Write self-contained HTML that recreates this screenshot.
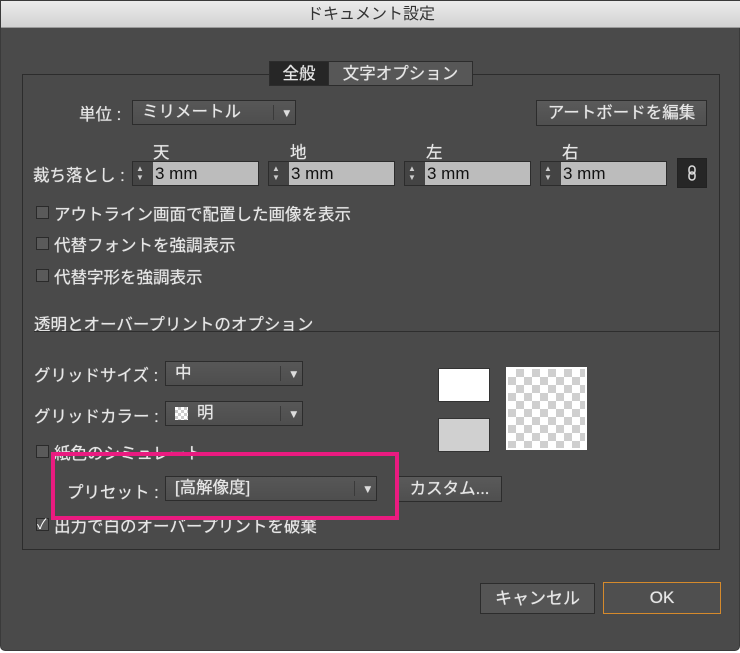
<!DOCTYPE html>
<html><head><meta charset="utf-8"><style>
*{box-sizing:border-box;margin:0;padding:0}
body{width:740px;height:653px;background:#fff;position:relative;overflow:hidden;font-family:"Liberation Sans","Noto Sans CJK JP",sans-serif;color:#e6e6e6;font-size:16.5px}
.dlg{position:absolute;left:0;top:0;width:740px;height:651px;background:#4a4a4a;border-radius:0 0 5px 5px;border:1px solid #3a3a3a}
.a{position:absolute;white-space:nowrap}
.title{left:0;top:0;width:740px;height:27px;background:linear-gradient(#ececec,#d2d2d2);border-bottom:1px solid #9a9a9a;color:#333;text-align:center;font-size:16px;line-height:27px}
.box{left:21px;top:73px;width:698px;height:476px;border:1px solid #2c2c2c}
.tab{top:60px;height:25px;line-height:24px;text-align:center;font-size:16.5px;border:1px solid #2c2c2c;text-shadow:0 0 .6px #fff}
.dd{height:25px;border:1px solid #2c2c2c;background:linear-gradient(#575757,#4e4e4e);line-height:23px;padding-left:9px;font-size:16.5px;text-shadow:0 0 .6px #fff}
.dd:after{content:"▾";position:absolute;right:5px;top:0;font-size:13px;color:#ddd}
.dd:before{content:"";position:absolute;right:21px;top:4px;height:15px;border-left:1px solid #3a3a3a}
.btn{height:26px;border:1px solid #2c2c2c;background:linear-gradient(#5a5a5a,#4f4f4f);text-align:center;line-height:24px;font-size:16.5px;text-shadow:0 0 .6px #fff}
.num{height:25px;border:1px solid #2c2c2c;background:#444}
.num .f{position:absolute;left:20px;top:0;right:0;bottom:0;background:#bcbcbc;color:#111;font-size:17px;line-height:23px;padding-left:2px}
.num .s{position:absolute;left:3px;top:2px;font-size:8px;line-height:9px;color:#ccc}
.cb{width:13px;height:13px;border:1px solid #2a2a2a;background:#5a5a5a}
.lbl{font-size:16.5px;text-shadow:0 0 .6px #fff}
</style></head><body>
<div class="dlg">
<div class="a title">ドキュメント設定</div>
<div class="a box"></div>
<div class="a tab" style="left:268px;width:60px;background:#262626">全般</div>
<div class="a tab" style="left:327px;width:145px;background:#575757">文字オプション</div>

<div class="a lbl" style="left:78px;top:100px">単位 :</div>
<div class="a dd" style="left:131px;top:99px;width:164px">ミリメートル</div>
<div class="a btn" style="left:535px;top:99px;width:171px">アートボードを編集</div>

<div class="a lbl" style="left:152px;top:138px">天</div>
<div class="a lbl" style="left:289px;top:138px">地</div>
<div class="a lbl" style="left:425px;top:138px">左</div>
<div class="a lbl" style="left:561px;top:138px">右</div>
<div class="a lbl" style="left:32px;top:161px">裁ち落とし :</div>
<div class="a num" style="left:131px;top:160px;width:127px"><div class="s">▲<br>▼</div><div class="f">3 mm</div></div>
<div class="a num" style="left:267px;top:160px;width:127px"><div class="s">▲<br>▼</div><div class="f">3 mm</div></div>
<div class="a num" style="left:403px;top:160px;width:127px"><div class="s">▲<br>▼</div><div class="f">3 mm</div></div>
<div class="a num" style="left:539px;top:160px;width:127px"><div class="s">▲<br>▼</div><div class="f">3 mm</div></div>
<div class="a" style="left:676px;top:157px;width:30px;height:30px;background:#262626;border:1px solid #222"><svg width="28" height="28"><rect x="11" y="7" width="6" height="8" rx="3" fill="none" stroke="#ddd" stroke-width="1.5"/><rect x="11" y="13" width="6" height="8" rx="3" fill="none" stroke="#ddd" stroke-width="1.5"/></svg></div>

<div class="a cb" style="left:35px;top:205px"></div><div class="a lbl" style="left:53px;top:200px">アウトライン画面で配置した画像を表示</div>
<div class="a cb" style="left:35px;top:236px"></div><div class="a lbl" style="left:53px;top:231px">代替フォントを強調表示</div>
<div class="a cb" style="left:35px;top:268px"></div><div class="a lbl" style="left:53px;top:263px">代替字形を強調表示</div>

<div class="a lbl" style="left:33px;top:310px">透明とオーバープリントのオプション</div>
<div class="a" style="left:33px;top:330px;width:685px;height:1px;background:#2e2e2e"></div>

<div class="a lbl" style="left:33px;top:361px">グリッドサイズ :</div>
<div class="a dd" style="left:164px;top:360px;width:138px">中</div>
<div class="a lbl" style="left:33px;top:402px">グリッドカラー :</div>
<div class="a dd" style="left:164px;top:400px;width:138px"><span style="display:inline-block;width:13px;height:13px;vertical-align:-2px;background:repeating-conic-gradient(#ccc 0 25%,#fff 0 50%) 0 0/6px 6px;margin-right:9px"></span>明</div>

<div class="a" style="left:437px;top:367px;width:52px;height:34px;background:#fff;border:1px solid #333"></div>
<div class="a" style="left:437px;top:417px;width:52px;height:34px;background:#d0d0d0;border:1px solid #333"></div>
<div class="a" style="left:505px;top:366px;width:81px;height:83px;border:2px solid #fff;background:repeating-conic-gradient(#cfcfcf 0 25%,#fff 0 50%) 0 0/16px 16px"></div>

<div class="a cb" style="left:35px;top:444px"></div><div class="a lbl" style="left:53px;top:439px">紙色のシミュレート</div>
<div class="a lbl" style="left:66px;top:478px">プリセット :</div>
<div class="a dd" style="left:164px;top:475px;width:212px">[高解像度]</div>
<div class="a btn" style="left:396px;top:475px;width:105px">カスタム...</div>
<div class="a cb" style="left:35px;top:517px;color:#fff;font-size:14px;line-height:10px">✓</div><div class="a lbl" style="left:53px;top:512px">出力で白のオーバープリントを破棄</div>

<div class="a" style="left:50px;top:451px;width:348px;height:68px;border:4px solid #ea1b80"></div>

<div class="a btn" style="left:479px;top:582px;width:115px;height:31px;line-height:29px;font-size:17px;background:#555">キャンセル</div>
<div class="a btn" style="left:602px;top:581px;width:118px;height:32px;line-height:30px;font-size:17px;border:1px solid #d58a2c;background:#4f4f4f">OK</div>
</div>
</body></html>
